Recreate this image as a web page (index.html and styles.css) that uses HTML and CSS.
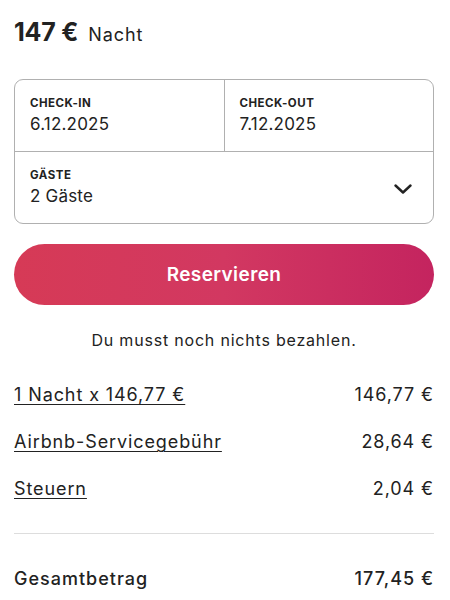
FILE: index.html
```html
<!DOCTYPE html>
<html lang="de">
<head>
<meta charset="utf-8">
<link rel="stylesheet" href="styles.css">
</head>
<body>
<div class="card">
  <div class="price"><span class="amount">147 €</span><span class="unit">Nacht</span></div>

  <div class="picker">
    <div class="dates">
      <div class="cell">
        <div class="label">CHECK-IN</div>
        <div class="value">6.12.2025</div>
      </div>
      <div class="cell cell-right">
        <div class="label">CHECK-OUT</div>
        <div class="value">7.12.2025</div>
      </div>
    </div>
    <div class="guests">
      <div>
        <div class="label">GÄSTE</div>
        <div class="value">2 Gäste</div>
      </div>
      <svg class="chevron" width="18" height="10" viewBox="0 0 18 10"><path d="M1.5 1.5 L9 8.5 L16.5 1.5" fill="none" stroke="#222" stroke-width="2.4" stroke-linecap="round" stroke-linejoin="round"/></svg>
    </div>
  </div>

  <button class="reserve">Reservieren</button>

  <p class="note">Du musst noch nichts bezahlen.</p>

  <div class="rows">
    <div class="row"><span class="link">1 Nacht x 146,77 €</span><span>146,77 €</span></div>
    <div class="row"><span class="link">Airbnb-Servicegebühr</span><span>28,64 €</span></div>
    <div class="row"><span class="link">Steuern</span><span>2,04 €</span></div>
  </div>

  <div class="total"><span>Gesamtbetrag</span><span>177,45 €</span></div>
</div>
</body>
</html>
```
FILE: styles.css
```css
* { box-sizing: border-box; }
html, body { margin: 0; padding: 0; background: #fff; }
body {
  font-family: "Inter", "Roboto", sans-serif;
  color: #222;
}
.card {
  width: 420px;
  margin-left: 14px;
  padding-top: 17px;
}
.price {
  height: 36px;
  display: flex;
  align-items: baseline;
  gap: 10px;
}
.amount { font-size: 25px; font-weight: 700; letter-spacing: -0.2px; }
.unit { font-size: 18px; font-weight: 400; letter-spacing: 0.9px; }
.picker {
  margin-top: 26px;
  border: 1px solid #b0b0b0;
  border-radius: 9px;
  height: 145px;
  display: flex;
  flex-direction: column;
}
.dates {
  display: flex;
  height: 72px;
  border-bottom: 1px solid #b0b0b0;
}
.cell {
  flex: 1;
  padding: 16px 0 0 15px;
}
.cell-right { border-left: 1px solid #b0b0b0; }
.label {
  font-size: 11.5px;
  font-weight: 700;
  letter-spacing: 0.5px;
  line-height: 14px;
}
.value {
  font-size: 17px;
  line-height: 22px;
  margin-top: 3px;
  letter-spacing: 0.2px;
}
.guests {
  flex: 1;
  display: flex;
  align-items: center;
  justify-content: space-between;
  padding: 0 21px 0 15px;
}
.guests > div { margin-top: -1px; }
.chevron { display: block; margin-top: 2px; }
.reserve {
  display: block;
  width: 100%;
  height: 61px;
  margin-top: 20px;
  border: none;
  border-radius: 31px;
  background: linear-gradient(to right, #d63a56 0%, #d23861 50%, #c4245f 100%);
  color: #fff;
  font-family: inherit;
  font-size: 19px;
  font-weight: 600;
  letter-spacing: 0.4px;
  padding: 0;
}
.note {
  margin: 24px 0 0;
  text-align: center;
  font-size: 16px;
  line-height: 22px;
  letter-spacing: 0.8px;
}
.rows {
  margin-top: 32px;
  display: flex;
  flex-direction: column;
  gap: 23px;
}
.row {
  display: flex;
  justify-content: space-between;
  font-size: 18px;
  line-height: 24px;
  letter-spacing: 0.9px;
}
.link {
  text-decoration: underline;
  text-decoration-thickness: 1px;
  text-underline-offset: 3px;
}
.total {
  margin-top: 32px;
  border-top: 1px solid #dddddd;
  padding-top: 33px;
  display: flex;
  justify-content: space-between;
  font-size: 18px;
  font-weight: 500;
  line-height: 24px;
  letter-spacing: 1px;
}
```
